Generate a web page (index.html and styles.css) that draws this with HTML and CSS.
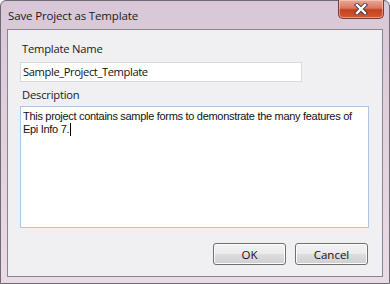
FILE: index.html
```html
<!DOCTYPE html>
<html>
<head>
<meta charset="utf-8">
<link rel="stylesheet" href="styles.css">
</head>
<body>
<div class="window">
  <div class="titlebar">
    <span class="title">Save Project as Template</span>
    <button class="close" aria-label="Close">
      <svg width="14" height="12" viewBox="0 0 14 12">
        <path d="M3 2 L11 10 M11 2 L3 10" stroke="#3a3a4a" stroke-width="4.2" stroke-linecap="square" fill="none"/>
        <path d="M3 2 L11 10 M11 2 L3 10" stroke="#ffffff" stroke-width="2.4" stroke-linecap="square" fill="none"/>
      </svg>
    </button>
  </div>
  <div class="client">
    <label class="label">Template Name</label>
    <div class="input">Sample_Project_Template</div>
    <label class="label desc-label">Description</label>
    <div class="textarea">This project contains sample forms to demonstrate the many features of Epi Info 7.<span class="caret"></span></div>
    <div class="buttons">
      <button class="btn">OK</button>
      <button class="btn">Cancel</button>
    </div>
  </div>
</div>
</body>
</html>
```

FILE: styles.css
```css
html, body {
  margin: 0;
  padding: 0;
  background: #ffffff;
}

.window {
  width: 390px;
  height: 284px;
  box-sizing: border-box;
  border: 1px solid #6f6a72;
  border-radius: 6px 6px 0 0;
  background: linear-gradient(180deg, #d8c7d6 0%, #e0d0de 40%, #e9dbe7 100%);
  display: flex;
  flex-direction: column;
  padding: 0 6px 6px 6px;
  font-family: "Open Sans", "Noto Sans", sans-serif;
}

.titlebar {
  height: 28px;
  display: flex;
  align-items: flex-start;
  justify-content: space-between;
}

.title {
  font-size: 11.5px;
  color: #1a1a1a;
  margin-top: 7px;
  margin-left: 1px;
  letter-spacing: -0.15px;
}

.close {
  width: 46px;
  height: 19px;
  margin-top: -1px;
  margin-right: -1px;
  padding: 0;
  border: 1px solid #7a3a34;
  border-top: none;
  border-radius: 0 0 5px 5px;
  background: linear-gradient(180deg, #e9a898 0%, #d97760 45%, #c4401e 55%, #d25a34 100%);
  display: flex;
  align-items: center;
  justify-content: center;
  box-shadow: inset 0 0 0 1px rgba(255, 220, 200, 0.5);
}

.client {
  flex: 1;
  border: 1px solid #8c8590;
  background: #f0eff1;
  display: flex;
  flex-direction: column;
  padding: 11px 14px 0 12px;
}

.label {
  font-size: 11.2px;
  color: #1a1a1a;
  line-height: 16px;
  margin-left: 2px;
  letter-spacing: -0.2px;
}

.input {
  width: 282px;
  height: 20px;
  box-sizing: border-box;
  margin-top: 5px;
  border: 1px solid #d9d9dc;
  background: #ffffff;
  font-size: 11.2px;
  line-height: 17px;
  padding-left: 2px;
  color: #111;
  letter-spacing: -0.4px;
}

.desc-label {
  margin-top: 5px;
}

.textarea {
  width: 349px;
  height: 122px;
  box-sizing: border-box;
  margin-top: 3px;
  border: 1px solid #a9c8e6;
  background: #ffffff;
  font-family: "Liberation Sans", Arial, sans-serif;
  font-size: 11px;
  line-height: 13px;
  color: #111;
  padding: 3px 1px 0 2px;
  letter-spacing: -0.3px;
}

.caret {
  display: inline-block;
  width: 1px;
  height: 13px;
  background: #000;
  vertical-align: -3px;
  margin-left: 1px;
}

.buttons {
  display: flex;
  justify-content: flex-end;
  gap: 9px;
  margin-top: 15px;
}

.btn {
  width: 73px;
  height: 22px;
  box-sizing: border-box;
  border: 1px solid #707070;
  border-radius: 3px;
  background: linear-gradient(180deg, #f2f2f2 0%, #ebebeb 48%, #dddddd 52%, #cfcfcf 100%);
  box-shadow: inset 0 0 0 1px #fbfbfb;
  font-family: "Open Sans", "Noto Sans", sans-serif;
  font-size: 11.5px;
  color: #111;
  padding: 0;
}
```
